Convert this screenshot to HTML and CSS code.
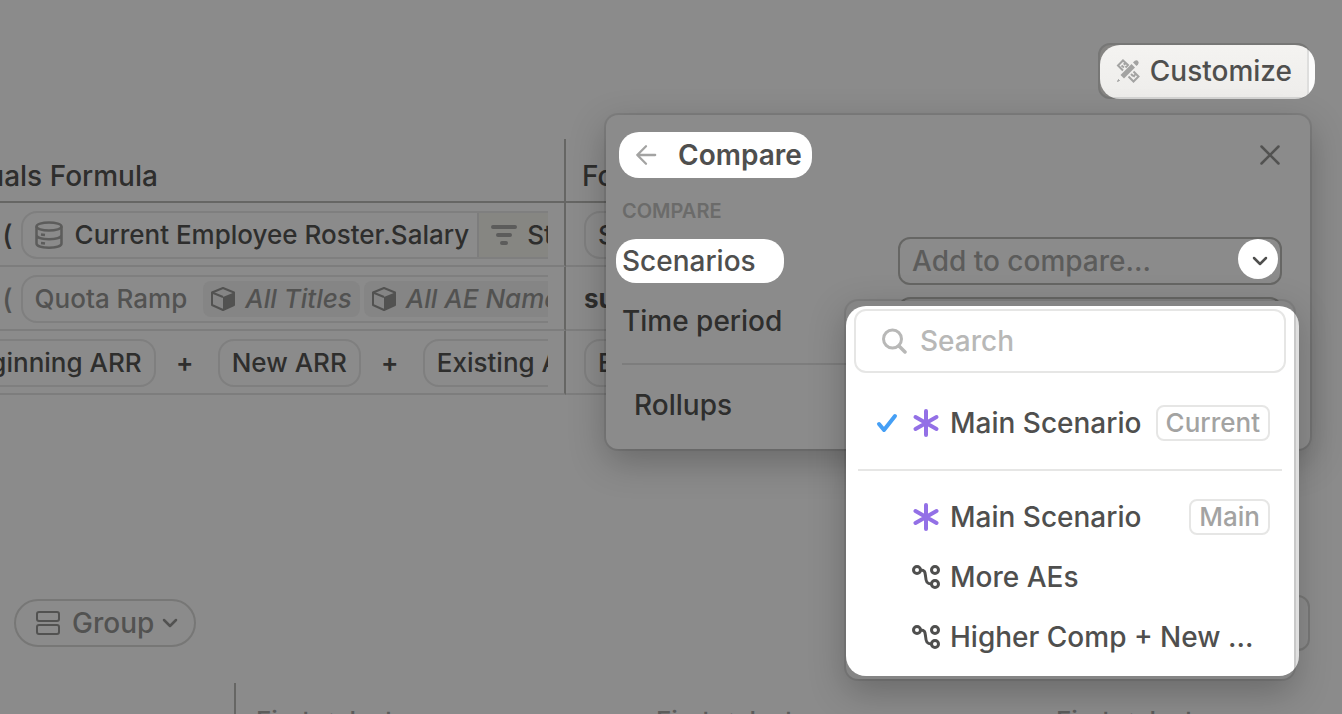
FILE: index.html
```html
<!DOCTYPE html>
<html lang="en">
<head>
    <meta charset="UTF-8">
    <meta name="viewport" content="width=device-width, initial-scale=1.0">
    <title>Formulas - Compare Scenarios</title>
    <link rel="stylesheet" href="styles.css">
</head>
<body>

<!-- Shared icons -->
<svg class="sprite" aria-hidden="true">
    <symbol id="icon-cube" viewBox="0 0 24 24">
        <path d="M12 1 L23 5.5 V18 L12 23 L1 18 V5.5 Z" fill="none" stroke="currentColor" stroke-width="2" stroke-linejoin="round"/>
        <path d="M1 5.5 L12 10" fill="none" stroke="currentColor" stroke-width="2"/>
        <path d="M12 10 L23 5.5 V18 L12 23 Z" fill="currentColor"/>
    </symbol>
    <symbol id="icon-chevron" viewBox="0 0 16 16">
        <path d="M2 5 L8 11 L14 5" fill="none" stroke="currentColor" stroke-width="2.5" stroke-linecap="round" stroke-linejoin="round"/>
    </symbol>
    <symbol id="icon-star" viewBox="0 0 28 28">
        <path d="M14 2 V26 M3.500 8 L24.500 20 M24.500 8 L3.500 20" fill="none" stroke="currentColor" stroke-width="4" stroke-linecap="round"/>
    </symbol>
    <symbol id="icon-branch" viewBox="0 0 28 28">
        <g fill="none" stroke="currentColor" stroke-width="3">
            <circle cx="5" cy="7" r="3.5"/>
            <circle cx="23" cy="7" r="3.5"/>
            <circle cx="23" cy="21" r="3.5"/>
            <path d="M8.500 7 C13 7 13 9 13.500 13 C14 19 15 21 19.500 21"/>
        </g>
    </symbol>
</svg>

<main class="page">
    <table class="formulas">
        <colgroup>
            <col class="col-actuals">
            <col>
        </colgroup>
        <thead>
            <tr>
                <th>Actuals Formula</th>
                <th>Forecast Formula</th>
            </tr>
        </thead>
        <tbody>
            <tr>
                <td>
                    <div class="formula">
                        <span class="fn">sum (</span>
                        <span class="chip">
                            <svg class="db-icon" viewBox="0 0 28 28">
                                <g fill="none" stroke="currentColor" stroke-width="2.5">
                                    <ellipse cx="14" cy="5.500" rx="12.500" ry="4"/>
                                    <path d="M1.500 5.500 V22.500 C1.500 28 26.500 28 26.500 22.500 V5.500 M1.500 14 C1.500 19.500 26.500 19.500 26.500 14"/>
                                    <path d="M6 13.500 L10 14 M6 22 L10 22.500"/>
                                </g>
                            </svg>
                            Current Employee Roster.Salary
                            <span class="filter">
                                <svg class="filter-icon" viewBox="0 0 26 24">
                                    <path d="M2 4 H24 M7 12 H19 M11 20 H15" stroke="currentColor" stroke-width="4" stroke-linecap="round"/>
                                </svg>
                                Start Date
                            </span>
                        </span>
                    </div>
                </td>
                <td><div class="formula"><span class="chip">Salary</span></div></td>
            </tr>
            <tr>
                <td>
                    <div class="formula muted">
                        <span class="fn">sum (</span>
                        <span class="chip">
                            Quota Ramp
                            <span class="dimension first"><svg class="cube-icon"><use href="#icon-cube"/></svg>All Titles</span>
                            <span class="dimension"><svg class="cube-icon"><use href="#icon-cube"/></svg>All AE Names</span>
                        </span>
                    </div>
                </td>
                <td><div class="formula"><b>sum(</b></div></td>
            </tr>
            <tr>
                <td>
                    <div class="formula total">
                        <span class="chip">Beginning ARR</span>
                        <span class="plus">+</span>
                        <span class="chip">New ARR</span>
                        <span class="plus">+</span>
                        <span class="chip">Existing ARR</span>
                    </div>
                </td>
                <td><div class="formula"><span class="chip">Ending ARR</span></div></td>
            </tr>
        </tbody>
    </table>

    <div class="toolbar">
        <button class="group-btn">
            <svg class="group-icon" viewBox="0 0 24 24">
                <g fill="none" stroke="currentColor" stroke-width="2">
                    <rect x="1" y="1" width="22" height="9" rx="2"/>
                    <rect x="1" y="14" width="22" height="9" rx="2"/>
                </g>
            </svg>
            Group
            <svg class="chevron"><use href="#icon-chevron"/></svg>
        </button>
        <button class="display-btn" aria-label="Display"></button>
    </div>

    <div class="timeline">
        <span>First → last</span>
        <span>First → last</span>
        <span>First → last</span>
    </div>
</main>

<button class="customize">
    <svg class="tools-icon" viewBox="0 0 24 24">
        <path d="M4.500 16 L15.500 5 L19 8.500 L8 19.500 Z" fill="currentColor"/>
        <path d="M17 3.500 L18.500 2 Q20.500 0.500 22 2 Q23.500 3.500 22 5.500 L20.500 7 Z" fill="currentColor"/>
        <path d="M1.500 22.500 L2.500 20.500 L3.500 21.500 Z" fill="currentColor" stroke="currentColor"/>
        <path d="M7 11.500 L2 6.500 L7 1.500 L12 6 L9.500 8.500 M5.500 6.500 L8 8.500 M8 4 L9 6 M12.500 17.500 L17.500 22.500 L22.500 17.500 L17.500 12.500 M15 15 L17 17 M19 15.500 L17.500 18" fill="none" stroke="currentColor" stroke-width="2"/>
    </svg>
    Customize
</button>

<section class="panel">
    <header class="panel-header">
        <button class="back">
            <svg class="back-icon" viewBox="0 0 24 24">
                <path d="M22 12 H2.500 M12 2.500 L2.500 12 L12 21.500" fill="none" stroke="currentColor" stroke-width="2.5" stroke-linecap="round" stroke-linejoin="round"/>
            </svg>
            Compare
        </button>
        <button class="close" aria-label="Close">
            <svg viewBox="0 0 20 20">
                <path d="M1.500 1.500 L18.500 18.500 M18.500 1.500 L1.500 18.500" stroke="currentColor" stroke-width="2.5" stroke-linecap="round"/>
            </svg>
        </button>
    </header>

    <h2>COMPARE</h2>

    <div class="field">
        <label for="scenarios"><span class="spot">Scenarios</span></label>
        <div class="combo">
            <input id="scenarios" type="text" placeholder="Add to compare...">
            <button class="combo-toggle" aria-label="Show scenarios"><svg class="chevron"><use href="#icon-chevron"/></svg></button>
        </div>
    </div>
    <div class="field">
        <label for="period">Time period</label>
        <select id="period"><option></option></select>
    </div>
    <a class="rollups" href="#">Rollups</a>

    <div class="menu">
        <div class="search">
            <svg class="search-icon" viewBox="0 0 26 26">
                <path d="M17 18 L23 24" stroke="currentColor" stroke-width="3.5" stroke-linecap="round"/>
                <circle cx="10.500" cy="11" r="9" fill="none" stroke="currentColor" stroke-width="3"/>
            </svg>
            <input type="text" placeholder="Search" aria-label="Search">
        </div>
        <ul class="current">
            <li>
                <button>
                    <svg class="check-icon" viewBox="0 0 22 22">
                        <path d="M3 12 L8 18 L19 4" fill="none" stroke="currentColor" stroke-width="4" stroke-linecap="round" stroke-linejoin="round"/>
                    </svg>
                    <svg class="item-icon main"><use href="#icon-star"/></svg>
                    <span class="name">Main Scenario</span>
                    <span class="tag">Current</span>
                </button>
            </li>
        </ul>
        <ul>
            <li>
                <button>
                    <svg class="item-icon main"><use href="#icon-star"/></svg>
                    <span class="name">Main Scenario</span>
                    <span class="tag">Main</span>
                </button>
            </li>
            <li>
                <button>
                    <svg class="item-icon"><use href="#icon-branch"/></svg>
                    <span class="name">More AEs</span>
                </button>
            </li>
            <li>
                <button>
                    <svg class="item-icon"><use href="#icon-branch"/></svg>
                    <span class="name">Higher Comp + New Pricing</span>
                </button>
            </li>
        </ul>
    </div>
</section>

</body>
</html>
```
FILE: styles.css
```css
/* Basic reset */
* {
    margin: 0;
    padding: 0;
    box-sizing: border-box;
}

body {
    font-family: Inter, "Liberation Sans", sans-serif;
    font-size: 28px;
    font-weight: 450;
    line-height: 36px;
    color: #2e2e2d;
    background-color: #8b8b8b;
    position: relative;
    height: 100vh;
    overflow: hidden;
}

button, input, select {
    font: inherit;
    color: inherit;
    background: none;
    border: none;
}

ul {
    list-style: none;
}

svg {
    flex-shrink: 0;
}

.sprite {
    display: none;
}

.chevron {
    width: 16px;
    height: 16px;
}

/* Formula table */
.page {
    padding-top: 139px;
    overflow: hidden;
}

.formulas {
    width: 100%;
    margin-left: -70px;
    table-layout: fixed;
    border-collapse: separate;
    border-spacing: 0;
}

.col-actuals {
    width: 636px;
}

.formulas th, .formulas td {
    height: 64px;
    border-bottom: 2px solid #7d7d7d;
    white-space: nowrap;
    text-align: left;
    padding: 2px 16px 0;
}

.formulas th {
    font-weight: 450;
    border-bottom-color: #666664;
    padding-top: 12px;
}

.formulas th:first-child {
    padding-left: 12px;
}

.formulas td:last-child {
    padding-left: 18px;
}

.formulas th:first-child, .formulas td:first-child {
    border-right: 2px solid #666664;
}

.formula {
    display: flex;
    align-items: center;
    overflow: hidden;
    font-size: 26px;
    font-weight: 500;
}

.formula.muted {
    color: #525251;
}

.formula.total .chip:first-child {
    margin-left: -2px;
}

.fn {
    margin: 0 8px 0 -8px;
    font-size: 28px;
    font-weight: 450;
}

.chip {
    display: flex;
    flex-shrink: 0;
    align-items: center;
    height: 48px;
    padding: 0 12px;
    border: 2px solid #7f7f7f;
    border-radius: 16px;
}

.db-icon {
    width: 28px;
    height: 28px;
    margin-right: 12px;
    color: #5c5c5b;
}

.filter {
    display: flex;
    align-items: center;
    height: 44px;
    margin-left: 8px;
    padding: 0 12px;
    border-left: 2px solid #7d7d7d;
    background-color: #868682;
}

.filter-icon {
    width: 26px;
    height: 24px;
    margin-right: 10px;
    color: #5c5c5b;
}

.dimension {
    display: flex;
    align-items: center;
    height: 36px;
    margin-right: 4px;
    padding: 0 8px;
    border-radius: 8px;
    background-color: #858585;
    font-style: italic;
}

.dimension.first {
    margin-left: 16px;
}

.cube-icon {
    width: 24px;
    height: 24px;
    margin-right: 10px;
}

.plus {
    width: 62px;
    flex-shrink: 0;
    padding-right: 4px;
    font-weight: 600;
    text-align: center;
}

/* Lower toolbar and timeline */
.toolbar {
    display: flex;
    justify-content: space-between;
    align-items: center;
    margin-top: 200px;
    padding: 0 32px 0 14px;
}

.group-btn {
    display: flex;
    align-items: center;
    height: 48px;
    padding: 0 16px 0 20px;
    border: 2px solid #777776;
    border-radius: 24px;
    color: #525251;
}

.group-icon {
    width: 24px;
    height: 24px;
    margin-right: 12px;
}

.group-btn .chevron {
    margin-left: 8px;
}

.display-btn {
    width: 140px;
    height: 56px;
    border: 2px solid #777776;
    border-radius: 12px;
}

.timeline {
    display: flex;
    margin-top: 32px;
    margin-left: 234px;
    padding: 20px 0 0 20px;
    border-left: 2px solid #666664;
    overflow: hidden;
    font-size: 26px;
    font-weight: 500;
    color: #5c5c5b;
}

.timeline span {
    width: 400px;
    flex-shrink: 0;
}

/* Customize button */
.customize {
    position: absolute;
    z-index: 0;
    top: 43px;
    right: 32px;
    display: flex;
    align-items: center;
    height: 56px;
    padding: 0 16px;
    border: 2px solid #777776;
    border-radius: 12px;
    background-color: #868583;
    color: #4f4f4e;
}

.customize::before {
    content: "";
    position: absolute;
    z-index: -1;
    inset: 0 -7px -2px 0;
    border-radius: 20px;
    background:
        linear-gradient(to right, transparent calc(100% - 8px), #dededd calc(100% - 8px), #dededd calc(100% - 6px), #fcfcfc calc(100% - 6px)),
        linear-gradient(#f4f3f1, #eeedeb calc(100% - 2px), #d4d4d3 calc(100% - 2px));
}

.tools-icon {
    width: 24px;
    height: 24px;
    margin-right: 10px;
    color: #a3a3a2;
}

/* Compare panel */
.panel {
    position: absolute;
    top: 115px;
    right: 32px;
    width: 704px;
    height: 334px;
    padding: 16px 28px 0 16px;
    border-radius: 12px;
    background-color: #8b8b8b;
    box-shadow: 0 0 0 2px rgba(0, 0, 0, 0.08), 0 12px 36px rgba(0, 0, 0, 0.25);
}

.panel-header {
    display: flex;
    justify-content: space-between;
    align-items: center;
    height: 48px;
    padding-right: 2px;
}

.back {
    display: flex;
    align-items: center;
    height: 46px;
    margin-left: -3px;
    padding: 0 10px 0 16px;
    border-radius: 20px;
    background-color: #fff;
    color: #4f4f4e;
    font-weight: 600;
}

.back-icon {
    width: 22px;
    height: 22px;
    margin-right: 21px;
    color: #a3a3a2;
}

.close {
    display: flex;
    color: #525251;
}

.close svg {
    width: 20px;
    height: 20px;
}

.panel h2 {
    margin: 20px 0 14px;
    font-size: 20px;
    line-height: 24px;
    font-weight: 600;
    color: #6b6b6a;
}

.field {
    display: flex;
    justify-content: space-between;
    align-items: center;
    height: 48px;
    margin-bottom: 12px;
}

.spot {
    display: block;
    margin-left: -6px;
    padding: 4px 28px 4px 6px;
    border-radius: 20px;
    background-color: #fff;
    color: #4f4f4e;
}

.combo, .field select {
    width: 384px;
    height: 48px;
    border: 2px solid #666664;
    border-radius: 12px;
}

.field select {
    appearance: none;
}

.combo {
    display: flex;
    padding-left: 12px;
}

.combo input {
    flex: 1;
    min-width: 0;
}

.combo input::placeholder {
    color: #5c5c5b;
    opacity: 1;
}

.combo-toggle {
    display: flex;
    align-items: center;
    justify-content: center;
    width: 40px;
    height: 40px;
    margin-right: 2px;
    padding: 4px 0 0 4px;
    border-radius: 50%;
    background-color: #fff;
    color: #4f4f4e;
}

.rollups {
    display: block;
    margin-top: 18px;
    padding: 22px 12px;
    border-top: 2px solid #7d7d7d;
    color: inherit;
    text-decoration: none;
}

/* Scenario menu */
.menu {
    position: absolute;
    top: 186px;
    right: 16px;
    width: 448px;
    padding: 8px;
    border-radius: 12px;
    background-color: #858585;
    box-shadow: 0 0 0 2px rgba(0, 0, 0, 0.08), 0 12px 36px rgba(0, 0, 0, 0.25);
    color: #4f4f4e;
}

.menu::before {
    content: "";
    position: absolute;
    inset: 5px -5px 3px 0;
    border-radius: 20px;
    background: linear-gradient(to right, #fff 448px, #c8c8c8 448px, #c8c8c8 450px, #dfdfdf 450px);
}

.search, .menu ul {
    position: relative;
}

.search {
    display: flex;
    align-items: center;
    height: 64px;
    padding: 0 26px;
    border: 2px solid #e6e6e5;
    border-radius: 12px;
}

.search-icon {
    width: 26px;
    height: 26px;
    margin-right: 12px;
    color: #b8b8b7;
}

.search input {
    flex: 1;
    min-width: 0;
}

.search input::placeholder {
    color: #b8b8b7;
    opacity: 1;
}

.menu ul {
    margin: 0 4px;
    padding: 16px 12px 4px 54px;
}

.menu ul.current {
    padding: 20px 12px 16px 18px;
    border-bottom: 2px solid #e6e6e5;
}

.menu li button {
    display: flex;
    align-items: center;
    width: 100%;
    height: 60px;
}

.check-icon {
    width: 22px;
    height: 22px;
    margin-right: 14px;
    color: #459ff5;
}

.item-icon {
    width: 28px;
    height: 28px;
    margin-right: 10px;
}

.item-icon.main {
    color: #9370e6;
}

.name {
    flex: 1;
    min-width: 0;
    margin-right: 12px;
    text-align: left;
    overflow: hidden;
    white-space: nowrap;
    text-overflow: ellipsis;
}

.tag {
    height: 36px;
    padding: 0 8px;
    border: 2px solid #e6e6e5;
    border-radius: 8px;
    font-size: 26px;
    line-height: 32px;
    color: #a3a3a2;
}
```
